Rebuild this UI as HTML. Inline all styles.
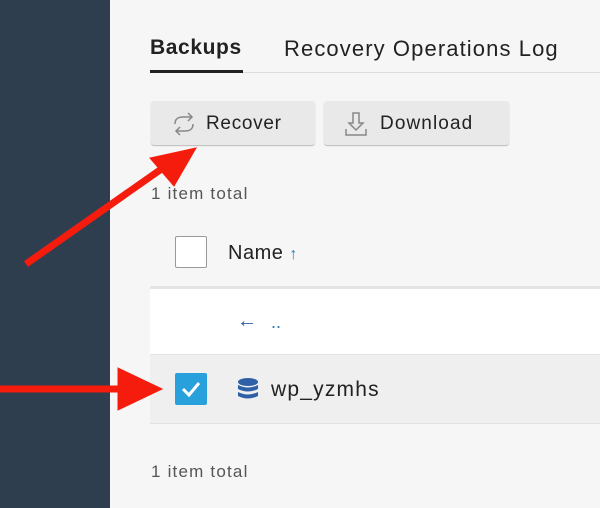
<!DOCTYPE html><html><head><style>
body{margin:0;width:600px;height:508px;overflow:hidden;background:#f6f6f6;font-family:"Liberation Sans",sans-serif;position:relative}
.sb{position:absolute;left:0;top:0;width:110px;height:508px;background:#2f3e4e}
.t{position:absolute;font-size:21px;color:#222}
.btn{position:absolute;top:101px;height:44px;background:#e9e9e9;border-radius:3px;box-shadow:0 1px 1px #bbb;font-size:19px;color:#222;line-height:46px;letter-spacing:0.7px}
.gray{color:#555;font-size:17px;position:absolute;letter-spacing:1.2px}
</style></head><body>
<div class="sb"></div>
<div class="t" style="left:150px;top:36px;font-weight:bold;letter-spacing:0.6px">Backups</div>
<div class="t" style="left:284px;top:36px;font-size:22px;letter-spacing:1.1px">Recovery Operations Log</div>
<div style="position:absolute;left:150px;top:72px;width:450px;height:1px;background:#ddd"></div>
<div style="position:absolute;left:150px;top:70px;width:93px;height:3px;background:#222"></div>
<div class="btn" style="left:151px;width:164px"><svg style="position:absolute;left:20px;top:11px" width="26" height="24" viewBox="0 0 26 24" fill="none" stroke="#888" stroke-width="1.5"><path d="M4 12 C4 6 8 5 12 5 H20 M17 1 L21 5 L17 9"/><path d="M22 12 C22 18 18 19 14 19 H6 M9 15 L5 19 L9 23"/></svg><span style="position:absolute;left:55px">Recover</span></div>
<div class="btn" style="left:324px;width:185px"><svg style="position:absolute;left:20px;top:10px" width="24" height="26" viewBox="0 0 24 26" fill="none" stroke="#888" stroke-width="1.5"><path d="M9 2 H15 V12 H19 L12 19 L5 12 H9 Z"/><path d="M2 18 V24 H22 V18"/></svg><span style="position:absolute;left:56px;letter-spacing:1.1px">Download</span></div>
<div class="gray" style="left:151px;top:184px">1 item total</div>
<div style="position:absolute;left:175px;top:236px;width:30px;height:30px;border:1.5px solid #999;background:#fff;border-radius:2px"></div>
<div class="t" style="left:228px;top:242px;font-size:20px;letter-spacing:0.5px">Name <span style="color:#2a7ab8;font-size:16px">↑</span></div>
<div style="position:absolute;left:150px;top:286px;width:450px;height:3px;background:#e4e4e4"></div>
<div style="position:absolute;left:150px;top:289px;width:450px;height:65px;background:#fff"></div>
<div style="position:absolute;left:237px;top:310px;font-size:20px;color:#2a5a9c">←</div>
<div style="position:absolute;left:271px;top:312px;font-size:18px;color:#2a7ab8">..</div>
<div style="position:absolute;left:150px;top:354px;width:450px;height:68px;background:#efefef;border-top:1px solid #e2e2e2;border-bottom:1px solid #e2e2e2"></div>
<div style="position:absolute;left:175px;top:373px;width:32px;height:32px;background:#27a0dc;border-radius:2px"><svg width="32" height="32"><path d="M8 16 L14 22 L24 10" stroke="#fff" stroke-width="3" fill="none"/></svg></div>
<svg style="position:absolute;left:238px;top:378px" width="20" height="24" viewBox="0 0 20 24" fill="#2f5fa5"><ellipse cx="10" cy="4" rx="10" ry="4"/><path d="M0 7 Q10 12 20 7 V11 Q10 16 0 11Z"/><path d="M0 14 Q10 19 20 14 V18 Q10 23 0 18Z"/></svg>
<div class="t" style="left:271px;top:378px;letter-spacing:1.2px">wp_yzmhs</div>
<div class="gray" style="left:151px;top:462px">1 item total</div>
<svg style="position:absolute;left:0;top:0" width="600" height="508"><g fill="#f61c0d" stroke="#f61c0d"><path d="M26 264 L170 163" stroke-width="7"/><path d="M196 148 L150 158 L174 186Z"/><path d="M0 389 L130 389" stroke-width="7"/><path d="M162 389 L118 368 L118 410Z"/></g></svg>
</body></html>
